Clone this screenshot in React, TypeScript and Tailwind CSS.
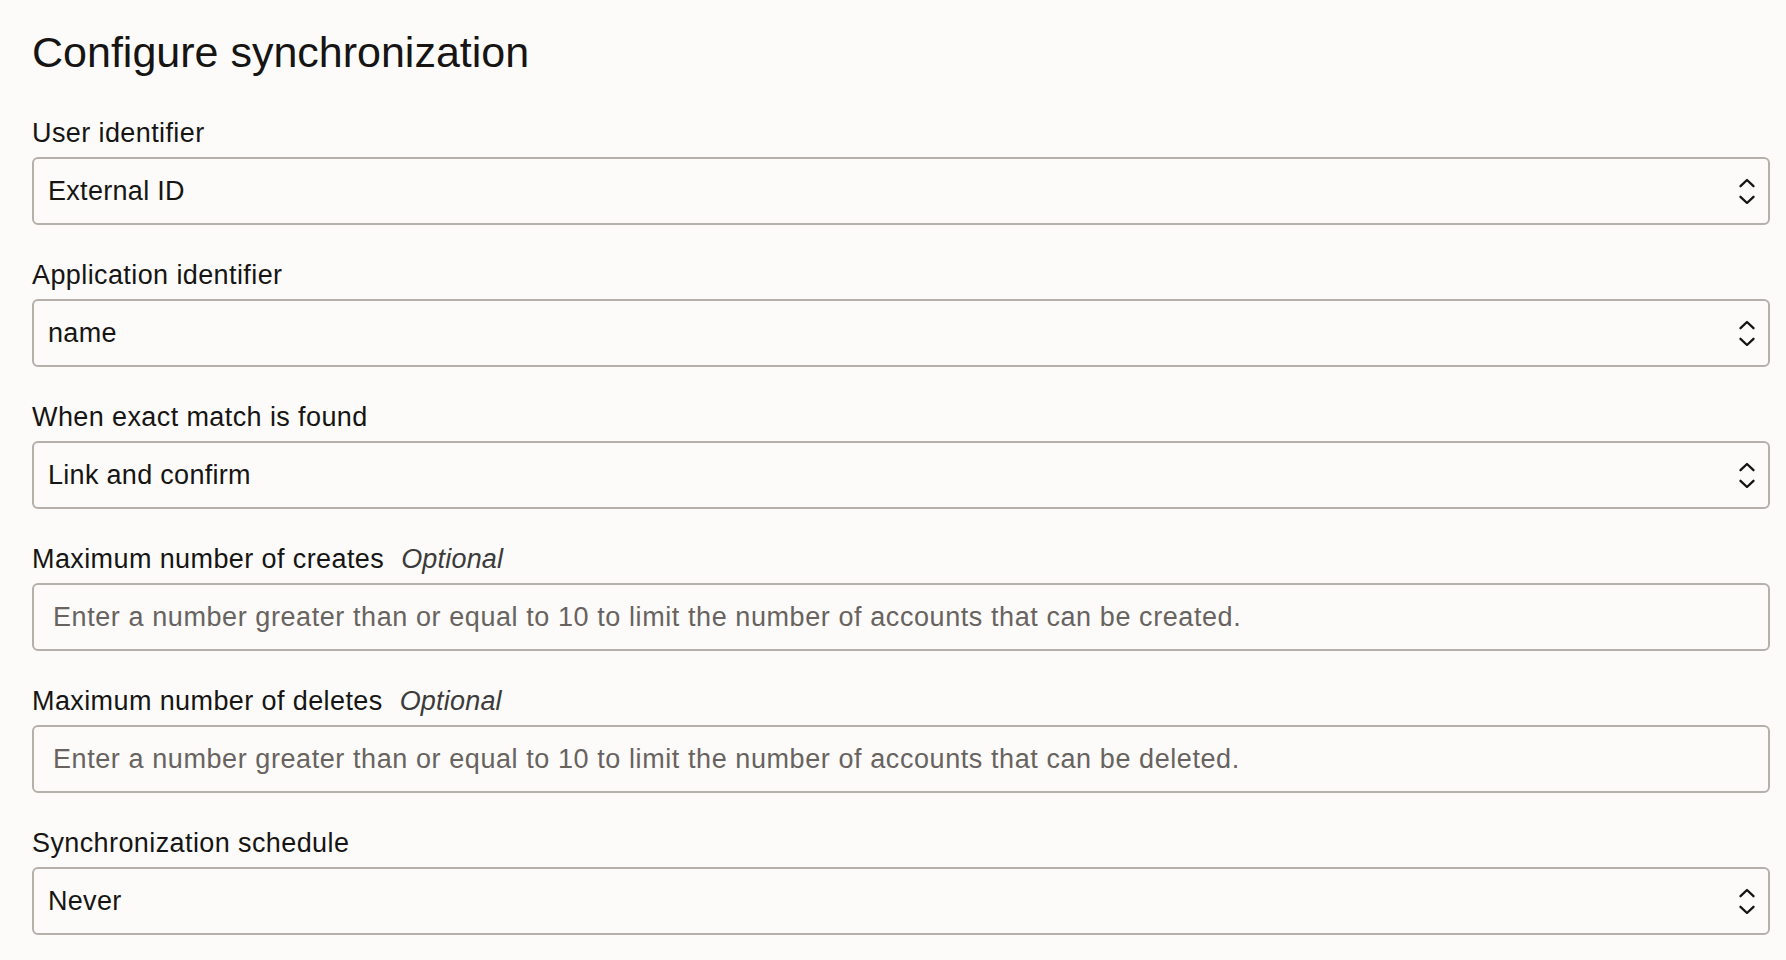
import React from "react";

const FONT = { fontFamily: '"Liberation Sans", Arial, Helvetica, sans-serif' };

function Chevrons() {
  return (
    <svg width="18" height="26" viewBox="0 0 18 26" fill="none" className="shrink-0">
      <polyline points="2.5,8.2 9,2 15.5,8.2" stroke="#161513" strokeWidth="2.3" strokeLinecap="round" strokeLinejoin="round" />
      <polyline points="2.5,18.8 9,25 15.5,18.8" stroke="#161513" strokeWidth="2.3" strokeLinecap="round" strokeLinejoin="round" />
    </svg>
  );
}

function Label({ text, optional }: { text: string; optional?: boolean }) {
  return (
    <div className="h-[32px] leading-[32px] text-[27px] tracking-[0.4px] text-[#161513] mb-[8px] whitespace-nowrap">
      {text}
      {optional && <span className="italic text-[#3d3b39] ml-[17px] tracking-[0.2px]">Optional</span>}
    </div>
  );
}

function SelectField({ label, value }: { label: string; value: string }) {
  return (
    <div className="flex flex-col">
      <Label text={label} />
      <div className="h-[68px] border-2 border-[#b5b0aa] rounded-[6px] bg-[#fcfbfa] flex items-center justify-between pl-[14px] pr-[12px]">
        <span className="text-[27px] tracking-[0.3px] text-[#161513] leading-none">{value}</span>
        <Chevrons />
      </div>
    </div>
  );
}

function InputField({ label, placeholder }: { label: string; placeholder: string }) {
  return (
    <div className="flex flex-col">
      <Label text={label} optional />
      <div className="h-[68px] border-2 border-[#b5b0aa] rounded-[6px] bg-[#fcfbfa] flex items-center pl-[19px] pr-[12px]">
        <input
          type="text"
          placeholder={placeholder}
          className="w-full bg-transparent outline-none text-[27px] tracking-[0.58px] text-[#161513] placeholder:text-[#68635f]"
          style={FONT}
        />
      </div>
    </div>
  );
}

export default function App() {
  return (
    <div className="min-h-screen bg-[#fcfbfa] pl-[32px] pr-[16px] pt-[31px]" style={FONT}>
      <h1 className="text-[43px] leading-[42px] text-[#161513] font-normal mb-[44px]">Configure synchronization</h1>
      <div className="flex flex-col gap-[34px]">
        <SelectField label="User identifier" value="External ID" />
        <SelectField label="Application identifier" value="name" />
        <SelectField label="When exact match is found" value="Link and confirm" />
        <InputField
          label="Maximum number of creates"
          placeholder="Enter a number greater than or equal to 10 to limit the number of accounts that can be created."
        />
        <InputField
          label="Maximum number of deletes"
          placeholder="Enter a number greater than or equal to 10 to limit the number of accounts that can be deleted."
        />
        <SelectField label="Synchronization schedule" value="Never" />
      </div>
    </div>
  );
}
